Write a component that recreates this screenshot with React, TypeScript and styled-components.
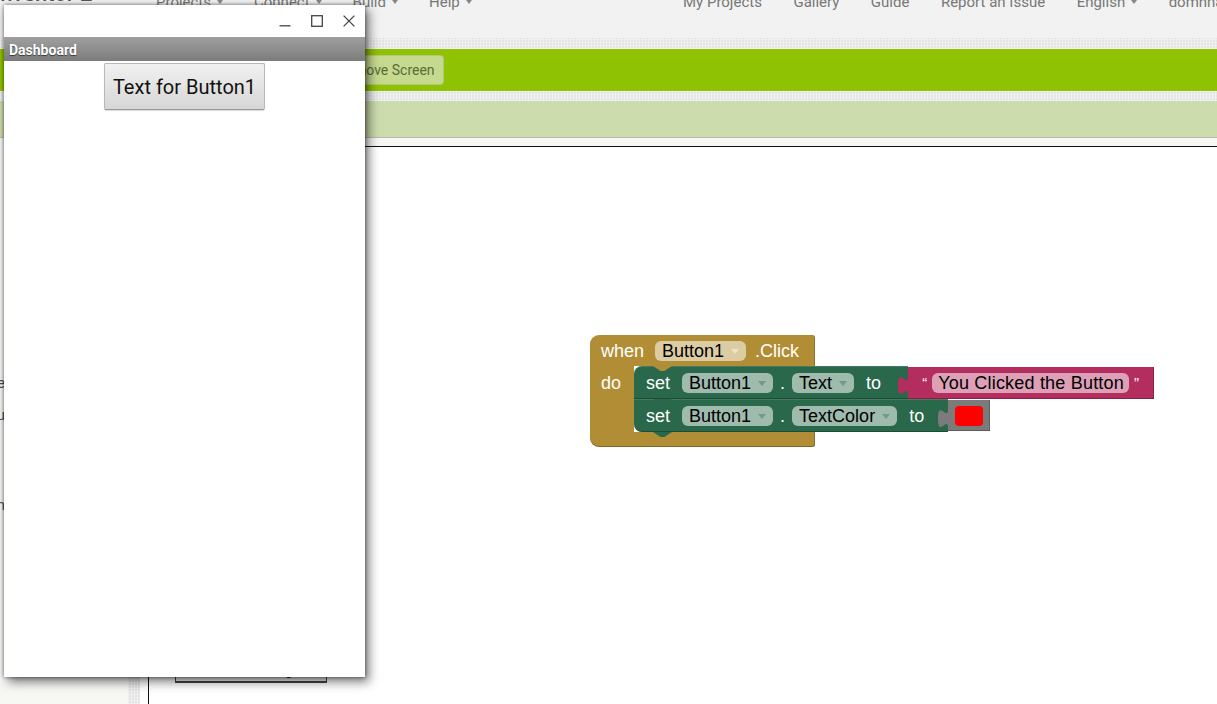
import React from "react";
import styled, { createGlobalStyle, css } from "styled-components";

const GlobalStyle = createGlobalStyle`
  * {
    box-sizing: border-box;
  }
  html, body {
    margin: 0;
    padding: 0;
    height: 100%;
    overflow: hidden;
    background: #ffffff;
  }
  body {
    font-family: Roboto, "Liberation Sans", Arial, sans-serif;
  }
  #root {
    height: 100%;
  }
`;

const MUSTARD = "#b18e35";
const SETTER = "#29684a";
const TEXT_RED = "#b32d5e";
const COLOR_GRAY = "#7b7b7b";

const textured = css`
  background-color: #e4e4e4;
  background-image: repeating-linear-gradient(
      90deg,
      rgba(255, 255, 255, 0.45) 0 1px,
      transparent 1px 3px
    ),
    repeating-linear-gradient(0deg, rgba(255, 255, 255, 0.35) 0 1px, transparent 1px 3px);
`;

const Page = styled.div`
  position: relative;
  height: 100vh;
  display: flex;
  flex-direction: column;
  overflow: hidden;
`;

/* top navigation */
const TopNav = styled.div`
  flex-shrink: 0;
  height: 38px;
  display: flex;
  align-items: flex-start;
  background: #f2f2f2;
  overflow: hidden;
  white-space: nowrap;
  font-size: 15px;
  color: #777;
`;

const NavSide = styled.div<{ $width?: number; $gap: number }>`
  display: flex;
  align-items: flex-start;
  gap: ${(p) => p.$gap}px;
  flex-shrink: 0;
  width: ${(p) => (p.$width ? `${p.$width}px` : "auto")};
  margin-top: -8px;
  line-height: 20px;
`;

const Logo = styled.div`
  width: 131px;
  margin-top: -8px;
  margin-left: -6px;
  overflow: hidden;
  font-size: 22px;
  font-weight: 500;
  color: #555;
`;

const NavItem = styled.span`
  display: inline-flex;
  align-items: center;
`;

const NavCaret = styled.span`
  display: inline-block;
  margin-left: 6px;
  border-left: 3px solid transparent;
  border-right: 3px solid transparent;
  border-top: 4px solid #888;
`;

const Strip = styled.div<{ $h: number }>`
  flex-shrink: 0;
  height: ${(p) => p.$h}px;
  ${textured}
`;

/* green toolbar */
const Toolbar = styled.div`
  flex-shrink: 0;
  height: 42px;
  display: flex;
  align-items: center;
  gap: 6px;
  padding-left: 12px;
  background: #8fc202;
  white-space: nowrap;
`;

const ProjectTitle = styled.div`
  width: 116px;
  font-size: 18px;
  font-weight: 700;
  color: #ffffff;
`;

const ToolButton = styled.div`
  height: 30px;
  padding: 0 8px;
  display: flex;
  align-items: center;
  border: 1px solid rgba(90, 110, 40, 0.18);
  border-radius: 4px;
  background: #c6da8f;
  color: #5b6b36;
  font-size: 14px;
`;

const SubBar = styled.div`
  flex-shrink: 0;
  height: 37px;
  background: #cddcad;
  border-bottom: 1px solid #b9b9b9;
`;

/* main area */
const Main = styled.div`
  flex: 1;
  min-height: 0;
  display: flex;
`;

const LeftPanel = styled.div`
  width: 128px;
  flex-shrink: 0;
  display: flex;
  flex-direction: column;
  padding-top: 235px;
  background: #f7f7f3;
  overflow: hidden;
  font-size: 15px;
  color: #4a4f57;
`;

const PanelItem = styled.div<{ $gap: number }>`
  width: 120px;
  margin-top: ${(p) => p.$gap}px;
  margin-left: -115px;
  line-height: 20px;
  text-align: right;
`;

const Gutter = styled.div`
  width: 12px;
  flex-shrink: 0;
  ${textured}
`;

const WorkArea = styled.div`
  flex: 1;
  display: flex;
  flex-direction: column;
  background: #ffffff;
`;

const WorkTop = styled.div`
  height: 8px;
  flex-shrink: 0;
  background: #f7f7f3;
`;

const WorkRow = styled.div`
  flex: 1;
  display: flex;
  padding-left: 8px;
`;

const Workspace = styled.div`
  position: relative;
  flex: 1;
  border-top: 1px solid #111;
  border-left: 1px solid #111;
  background: #ffffff;
`;

const WarningsButton = styled.div`
  position: absolute;
  left: 26px;
  top: 510px;
  width: 152px;
  height: 26px;
  display: flex;
  align-items: center;
  justify-content: center;
  border: 1px solid #444;
  border-bottom-width: 2px;
  background: #f2f2f2;
  font-family: "Liberation Sans", Arial, sans-serif;
  font-size: 14px;
  color: #222;
`;

/* blocks */
const EventBlock = styled.div`
  position: absolute;
  left: 441px;
  top: 188px;
  width: 225px;
  display: flex;
  flex-direction: column;
  font-family: "Liberation Sans", Arial, sans-serif;
  font-size: 18px;
  color: #ffffff;
`;

const EventHeader = styled.div`
  position: relative;
  z-index: 2;
  height: 31px;
  display: flex;
  align-items: center;
  gap: 11px;
  padding-left: 11px;
  background: ${MUSTARD};
  border-radius: 9px 3px 0 0;
  box-shadow: inset -1px 0 0 rgba(0, 0, 0, 0.2);

  &::after {
    content: "";
    position: absolute;
    left: 63px;
    bottom: -5px;
    width: 19px;
    height: 5px;
    background: ${MUSTARD};
    clip-path: polygon(0 0, 100% 0, 60% 100%, 40% 100%);
  }
`;

const EventBody = styled.div`
  display: flex;
`;

const DoArm = styled.div`
  width: 44px;
  flex-shrink: 0;
  padding: 6px 0 0 11px;
  line-height: 22px;
  background: ${MUSTARD};
`;

const EventFooter = styled.div`
  height: 15px;
  background: ${MUSTARD};
  border-radius: 0 0 3px 9px;
  box-shadow: inset 0 -1px 0 rgba(0, 0, 0, 0.25), inset -1px 0 0 rgba(0, 0, 0, 0.2);
`;

const Label = styled.span<{ $pull?: number }>`
  margin-left: ${(p) => p.$pull ?? 0}px;
  margin-right: ${(p) => p.$pull ?? 0}px;
  line-height: 20px;
  white-space: nowrap;
`;

const Stack = styled.div`
  position: relative;
  z-index: 1;
  flex-shrink: 0;
  display: flex;
  flex-direction: column;
`;

const SetRow = styled.div`
  position: relative;
  height: 33px;
  display: flex;
  align-items: center;
`;

const SetBody = styled.div<{ $corner: "top" | "bottom"; $tail: number }>`
  position: relative;
  height: 100%;
  display: flex;
  align-items: center;
  gap: 12px;
  padding: 0 ${(p) => p.$tail}px 0 12px;
  background: ${SETTER};
  border-radius: ${(p) => (p.$corner === "top" ? "8px 0 0 0" : "0 0 0 8px")};
  box-shadow: inset 0 -1px 0 rgba(0, 0, 0, 0.28), inset 0 1px 0 rgba(255, 255, 255, 0.12);

  &::after {
    content: "";
    position: absolute;
    z-index: 3;
    left: 19px;
    bottom: -5px;
    width: 19px;
    height: 5px;
    background: ${SETTER};
    clip-path: polygon(0 0, 100% 0, 60% 100%, 40% 100%);
  }
`;

const FieldPill = styled.span`
  display: inline-flex;
  align-items: center;
  height: 20px;
  padding: 0 7px;
  border-radius: 6px;
  background: rgba(255, 255, 255, 0.55);
  color: #000;
  line-height: 20px;
  white-space: nowrap;
`;

const FieldCaret = styled.span<{ $color: string }>`
  display: inline-block;
  margin-left: 7px;
  margin-top: 2px;
  border-left: 4px solid transparent;
  border-right: 4px solid transparent;
  border-top: 5px solid ${(p) => p.$color};
`;

const ValueBlock = styled.div<{ $color: string }>`
  position: relative;
  display: flex;
  align-items: center;
  background: ${(p) => p.$color};
  box-shadow: inset 0 -1px 0 rgba(0, 0, 0, 0.25), inset -1px 0 0 rgba(0, 0, 0, 0.2);
`;

const TextValue = styled(ValueBlock)`
  height: 32px;
  align-self: flex-end;
  gap: 5px;
  padding: 0 15px 0 14px;
`;

const ColorValue = styled(ValueBlock)`
  height: 31px;
  padding: 0 7px;
`;

const Quote = styled.span`
  font-size: 15px;
  line-height: 20px;
`;

const TextPill = styled(FieldPill)`
  padding: 0 5px 0 6px;
  letter-spacing: 0.2px;
`;

const Swatch = styled.span`
  width: 28px;
  height: 20px;
  border-radius: 4px;
  background: #ff0000;
`;

const TabIcon = styled.svg`
  position: absolute;
  left: -10px;
  top: 3px;
  overflow: visible;
`;

/* emulator window */
const EmulatorWindow = styled.div`
  position: absolute;
  z-index: 10;
  left: 4px;
  top: 5px;
  width: 361px;
  height: 672px;
  display: flex;
  flex-direction: column;
  background: #ffffff;
  box-shadow: 0 0 4px rgba(0, 0, 0, 0.55), 4px 5px 10px rgba(0, 0, 0, 0.5);
`;

const TitleBar = styled.div`
  height: 32px;
  flex-shrink: 0;
  display: flex;
  justify-content: flex-end;
`;

const WinButton = styled.div`
  width: 32px;
  display: flex;
  align-items: center;
  justify-content: center;
  color: #444;
`;

const ScreenTitle = styled.div`
  height: 24px;
  flex-shrink: 0;
  padding-left: 5px;
  background: linear-gradient(#a0a0a0, #7c7c7c);
  color: #ffffff;
  font-size: 14px;
  font-weight: 700;
  line-height: 26px;
  text-shadow: 0 1px 1px rgba(0, 0, 0, 0.6);
`;

const ScreenBody = styled.div`
  flex: 1;
  display: flex;
  flex-direction: column;
  align-items: center;
  padding-top: 2px;
`;

const AppButton = styled.div`
  height: 47px;
  padding: 0 8px;
  display: flex;
  align-items: center;
  border: 1px solid #b8b8b8;
  border-bottom-color: #989898;
  border-radius: 2px;
  background: linear-gradient(#f1f1f1, #d6d6d6);
  box-shadow: 0 1px 1px rgba(0, 0, 0, 0.15);
  color: #111;
  font-size: 20px;
`;

const Dropdown = ({ label, caret }: { label: string; caret: string }) => (
  <FieldPill>
    <span>{label}</span>
    <FieldCaret $color={caret} />
  </FieldPill>
);

const Tab = ({ color }: { color: string }) => (
  <TabIcon width={10} height={25} viewBox="0 0 8 20">
    <path d="M8 0 V5 C8 15 0 -3 0 12.5 C0 28 8 10 8 20 Z" fill={color} />
  </TabIcon>
);

const leftNav = ["Projects", "Connect", "Build", "Help"];
const rightNav = [
  { label: "My Projects" },
  { label: "Gallery" },
  { label: "Guide" },
  { label: "Report an Issue" },
  { label: "English", caret: true },
  { label: "domhnallobroin@gmail.com", caret: true },
];

export default function App() {
  return (
    <>
      <GlobalStyle />
      <Page>
        <TopNav>
          <NavSide $width={683} $gap={31}>
            <Logo>Inventor 2</Logo>
            {leftNav.map((item) => (
              <NavItem key={item}>
                {item}
                <NavCaret />
              </NavItem>
            ))}
          </NavSide>
          <NavSide $gap={31.5}>
            {rightNav.map((item) => (
              <NavItem key={item.label}>
                {item.label}
                {item.caret && <NavCaret />}
              </NavItem>
            ))}
          </NavSide>
        </TopNav>
        <Strip $h={11} />
        <Toolbar>
          <ProjectTitle>Dashboard</ProjectTitle>
          <ToolButton>Screen1 ▾</ToolButton>
          <ToolButton>Add Screen ...</ToolButton>
          <ToolButton>Remove Screen</ToolButton>
        </Toolbar>
        <Strip $h={10} />
        <SubBar />
        <Main>
          <LeftPanel>
            <PanelItem $gap={0}>Variable</PanelItem>
            <PanelItem $gap={12}>Menu</PanelItem>
            <PanelItem $gap={70}>Screen</PanelItem>
          </LeftPanel>
          <Gutter />
          <WorkArea>
            <WorkTop />
            <WorkRow>
              <Workspace>
                <EventBlock>
                  <EventHeader>
                    <Label>when</Label>
                    <Dropdown label="Button1" caret="#f1e4c2" />
                    <Label $pull={-2}>.Click</Label>
                  </EventHeader>
                  <EventBody>
                    <DoArm>do</DoArm>
                    <Stack>
                      <SetRow>
                        <SetBody $corner="top" $tail={27}>
                          <Label>set</Label>
                          <Dropdown label="Button1" caret="#6f9c82" />
                          <Label $pull={-5}>.</Label>
                          <Dropdown label="Text" caret="#6f9c82" />
                          <Label>to</Label>
                        </SetBody>
                        <TextValue $color={TEXT_RED}>
                          <Tab color={TEXT_RED} />
                          <Quote>“</Quote>
                          <TextPill>You Clicked the Button</TextPill>
                          <Quote>”</Quote>
                        </TextValue>
                      </SetRow>
                      <SetRow>
                        <SetBody $corner="bottom" $tail={24}>
                          <Label>set</Label>
                          <Dropdown label="Button1" caret="#6f9c82" />
                          <Label $pull={-5}>.</Label>
                          <Dropdown label="TextColor" caret="#6f9c82" />
                          <Label>to</Label>
                        </SetBody>
                        <ColorValue $color={COLOR_GRAY}>
                          <Tab color={COLOR_GRAY} />
                          <Swatch />
                        </ColorValue>
                      </SetRow>
                    </Stack>
                  </EventBody>
                  <EventFooter />
                </EventBlock>
                <WarningsButton>Show Warnings</WarningsButton>
              </Workspace>
            </WorkRow>
          </WorkArea>
        </Main>

        <EmulatorWindow>
          <TitleBar>
            <WinButton>
              <svg width="12" height="12" viewBox="0 0 12 12">
                <path d="M0.5 10.8 H11.5" stroke="currentColor" strokeWidth="1.3" />
              </svg>
            </WinButton>
            <WinButton>
              <svg width="12" height="12" viewBox="0 0 12 12">
                <rect x="0.7" y="0.7" width="10.6" height="10.6" fill="none" stroke="currentColor" strokeWidth="1.3" />
              </svg>
            </WinButton>
            <WinButton>
              <svg width="12" height="12" viewBox="0 0 12 12">
                <path d="M0.6 0.6 L11.4 11.4 M11.4 0.6 L0.6 11.4" stroke="currentColor" strokeWidth="1.3" />
              </svg>
            </WinButton>
          </TitleBar>
          <ScreenTitle>Dashboard</ScreenTitle>
          <ScreenBody>
            <AppButton>Text for Button1</AppButton>
          </ScreenBody>
        </EmulatorWindow>
      </Page>
    </>
  );
}
